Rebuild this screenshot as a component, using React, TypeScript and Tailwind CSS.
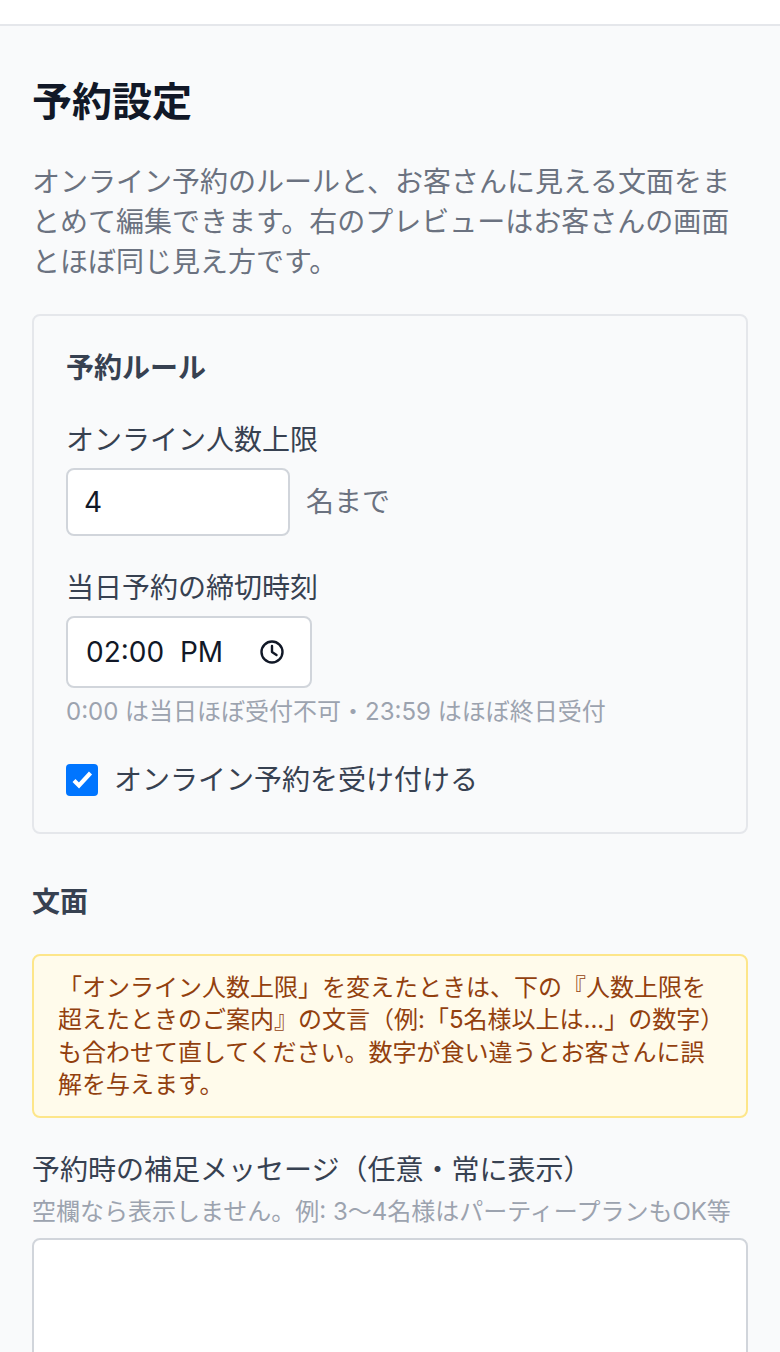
const font = { fontFamily: 'Inter, "Noto Sans CJK JP", sans-serif' };

export default function App() {
  return (
    <div className="h-[1352px] overflow-hidden bg-[#f9fafb]" style={font}>
      {/* top bar */}
      <div className="h-[26px] bg-white border-b-2 border-[#e5e7eb]" />

      <main className="px-[32px] pt-[48px]">
        <h1 className="text-[40px] leading-[56px] font-bold text-[#111827]">予約設定</h1>
        <p className="mt-[32px] text-[28px] leading-[40px] text-[#6b7280]">
          オンライン予約のルールと、お客さんに見える文面をまとめて編集できます。右のプレビューはお客さんの画面とほぼ同じ見え方です。
        </p>

        {/* Rules */}
        <section className="mt-[32px] h-[520px] border-2 border-[#e5e7eb] rounded-[8px] px-[32px] pt-[32px]">
          <h2 className="text-[28px] leading-[40px] font-bold text-[#374151]">予約ルール</h2>

          <label className="block mt-[32px] text-[28px] leading-[40px] text-[#374151]">オンライン人数上限</label>
          <div className="mt-[8px] flex items-center gap-[16px]">
            <div className="w-[224px] h-[68px] flex items-center px-[16px] bg-white border-2 border-[#d1d5db] rounded-[8px] text-[28px] text-[#111827]">
              4
            </div>
            <span className="text-[28px] leading-[40px] text-[#6b7280]">名まで</span>
          </div>

          <label className="block mt-[32px] text-[28px] leading-[40px] text-[#374151]">当日予約の締切時刻</label>
          <div className="mt-[8px] w-[246px] h-[72px] flex items-center justify-between pl-[18px] pr-[26px] bg-white border-2 border-[#d1d5db] rounded-[8px] text-[28px] text-[#111827]">
            <span className="whitespace-pre">02:00  PM</span>
            <svg width="24" height="24" viewBox="0 0 24 24" fill="none" stroke="#111827" strokeWidth="2.4" strokeLinecap="round" strokeLinejoin="round">
              <circle cx="12" cy="12" r="10.5" />
              <path d="M12 6v6l4.5 3" />
            </svg>
          </div>
          <p className="mt-[6px] text-[24px] leading-[36px] text-[#9ca3af]">0:00 は当日ほぼ受付不可・23:59 はほぼ終日受付</p>

          <label className="mt-[30px] flex items-center gap-[16px] text-[28px] leading-[40px] text-[#374151]">
            <span className="w-[32px] h-[32px] rounded-[4px] bg-[#0075ff] flex items-center justify-center">
              <svg width="24" height="24" viewBox="0 0 24 24" fill="none" stroke="white" strokeWidth="4.2">
                <path d="M4 12.5l5 5L20.5 5" />
              </svg>
            </span>
            オンライン予約を受け付ける
          </label>
        </section>

        {/* Copy */}
        <h2 className="mt-[48px] text-[28px] leading-[40px] font-bold text-[#374151]">文面</h2>

        <div className="mt-[32px] h-[164px] border-2 border-[#fde68a] bg-[#fffbeb] rounded-[8px] px-[24px] pt-[16px] text-[24px] leading-[32.4px] text-[#92400e]">
          「オンライン人数上限」を変えたときは、下の『人数上限を超えたときのご案内』の文言（例:「5名様以上は...」の数字）も合わせて直してください。数字が食い違うとお客さんに誤解を与えます。
        </div>

        <label className="block mt-[30px] text-[28px] leading-[44px] text-[#374151]">予約時の補足メッセージ（任意・常に表示）</label>
        <p className="mt-[2px] text-[24px] leading-[36px] text-[#9ca3af]">空欄なら表示しません。例: 3〜4名様はパーティープランもOK等</p>
        <div className="mt-[8px] h-[200px] bg-white border-2 border-[#d1d5db] rounded-[8px]" />
      </main>
    </div>
  );
}
